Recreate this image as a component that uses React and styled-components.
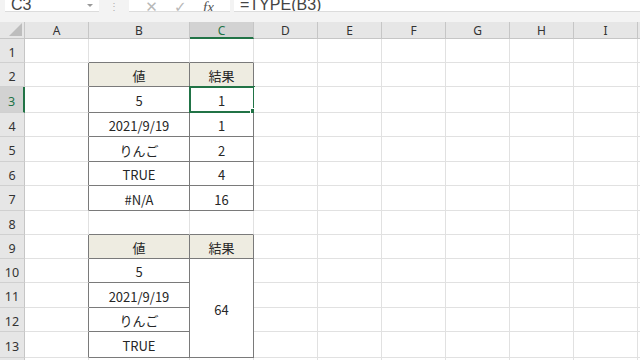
import React from 'react';
import styled, { createGlobalStyle } from 'styled-components';

const GREEN = '#217346';
const GRID = '#e1e1e1';
const DARK = '#7a7a7a';

const GlobalStyle = createGlobalStyle`
  html, body {
    margin: 0;
    padding: 0;
    background: #ffffff;
    overflow: hidden;
  }
  body {
    font-family: "Noto Sans CJK JP", "Noto Sans", sans-serif;
    color: #262626;
  }
`

const Page = styled.div`
  width: 640px;
  height: 360px;
  overflow: hidden;
  background: #ffffff;
`

const FormulaBar = styled.div`
  display: flex;
  align-items: flex-start;
  height: 22px;
  background: #f3f3f3;
  box-sizing: border-box;
`

const BarBox = styled.div`
  position: relative;
  height: 12px;
  width: ${props => props.$width};
  flex: ${props => props.$grow ? '1' : 'none'};
  margin-left: ${props => props.$gap || '0'};
  background: #ffffff;
  border-bottom: 1px solid #dcdcdc;
  box-sizing: border-box;
  overflow: hidden;
  display: flex;
  align-items: flex-end;
  justify-content: ${props => props.$spread ? 'space-around' : 'flex-start'};
  padding: 0 ${props => props.$pad || '6px'};
`

const BarText = styled.span`
  display: block;
  font-family: "Liberation Sans", sans-serif;
  font-size: 16px;
  line-height: 16px;
  margin-bottom: -2px;
  color: #444;
  white-space: nowrap;
`

const Caret = styled.span`
  margin-left: auto;
  margin-bottom: 4px;
  width: 0;
  height: 0;
  border-left: 3px solid transparent;
  border-right: 3px solid transparent;
  border-top: 3px solid #999;
`

const Dots = styled.div`
  width: 30px;
  height: 12px;
  display: flex;
  align-items: flex-end;
  justify-content: center;
  padding-bottom: 1px;
  box-sizing: border-box;
  color: #b0b0b0;
  font-size: 10px;
  line-height: 10px;
`

const Icon = styled.span`
  font-family: ${props => props.$serif ? '"Liberation Serif", serif' : '"DejaVu Sans", sans-serif'};
  font-style: ${props => props.$serif ? 'italic' : 'normal'};
  font-size: 15px;
  line-height: 15px;
  margin-bottom: -4px;
  color: ${props => props.$serif ? '#555' : '#b8b8b8'};
`

const Sheet = styled.div`
  display: grid;
  grid-template-columns: 25px 64px 101px 64px 64px 64px 64px 64px 64px 64px 64px;
  grid-template-rows: 17px ${props => props.$rows};
  width: 700px;
`

const Corner = styled.div`
  background: #e6e6e6;
  border-right: 1px solid #c6c6c6;
  border-bottom: 1px solid #c6c6c6;
  box-sizing: border-box;
  display: flex;
  align-items: flex-end;
  justify-content: flex-end;
  padding: 0 2px 2px 0;
`

const ColHead = styled.div`
  background: ${props => props.$active ? '#d2d2d2' : '#e6e6e6'};
  color: ${props => props.$active ? GREEN : '#333'};
  border-right: 1px solid #c6c6c6;
  border-bottom: ${props => props.$active ? `2px solid ${GREEN}` : '1px solid #c6c6c6'};
  box-sizing: border-box;
  display: flex;
  align-items: center;
  justify-content: center;
  font-family: "Noto Sans", sans-serif;
  font-size: 12px;
  padding-top: ${props => props.$active ? '1px' : '0'};
`

const RowHead = styled.div`
  background: ${props => props.$active ? '#d2d2d2' : '#e6e6e6'};
  color: ${props => props.$active ? GREEN : '#333'};
  border-right: ${props => props.$active ? `2px solid ${GREEN}` : '1px solid #c6c6c6'};
  border-bottom: 1px solid #d0d0d0;
  box-sizing: border-box;
  display: flex;
  align-items: center;
  justify-content: center;
  padding-top: 3px;
  font-family: "Noto Sans", sans-serif;
  font-size: 12.5px;
`

const Cell = styled.div`
  position: relative;
  grid-row: ${props => props.$span ? `span ${props.$span}` : 'auto'};
  background: ${props => props.$head ? '#eeece1' : '#ffffff'};
  border-right: 1px solid ${props => props.$darkRight ? DARK : GRID};
  border-bottom: 1px solid ${props => props.$darkBottom ? DARK : GRID};
  box-sizing: border-box;
  display: flex;
  align-items: center;
  justify-content: center;
  padding-top: 2px;
  font-size: 13px;
  color: #262626;
  white-space: nowrap;
`

const Selection = styled.div`
  position: absolute;
  left: -1px;
  top: -1px;
  right: -2px;
  bottom: -1px;
  border: 2px solid ${GREEN};
  pointer-events: none;
`

const Handle = styled.div`
  position: absolute;
  right: -4px;
  bottom: -4px;
  width: 5px;
  height: 5px;
  background: ${GREEN};
  border: 1px solid #ffffff;
`

const COLS = ['A', 'B', 'C', 'D', 'E', 'F', 'G', 'H', 'I', 'J'];
const ROW_HEIGHTS = [24, 24, 26, 24, 25, 24, 25, 24, 24, 24, 25, 24, 26, 24];

const VALUES = {
  'B2': { text: '値', head: true }, 'C2': { text: '結果', head: true },
  'B3': { text: '5' }, 'C3': { text: '1', selected: true },
  'B4': { text: '2021/9/19' }, 'C4': { text: '1' },
  'B5': { text: 'りんご' }, 'C5': { text: '2' },
  'B6': { text: 'TRUE' }, 'C6': { text: '4' },
  'B7': { text: '#N/A' }, 'C7': { text: '16' },
  'B9': { text: '値', head: true }, 'C9': { text: '結果', head: true },
  'B10': { text: '5' }, 'C10': { text: '64', span: 4 },
  'B11': { text: '2021/9/19' },
  'B12': { text: 'りんご' },
  'B13': { text: 'TRUE' },
};
const HIDDEN = ['C11', 'C12', 'C13'];

function inTable(r, c){
  const col = COLS[c];
  if(col !== 'B' && col !== 'C') return false;
  return (r >= 2 && r <= 7) || (r >= 9 && r <= 13);
}

const App = () => {
  let cells = new Array();
  cells.push(
    <Corner key="corner">
      <svg width="13" height="13" viewBox="0 0 13 13">
        <polygon points="13,0 13,13 0,13" fill="#bdbdbd" />
      </svg>
    </Corner>
  );
  COLS.forEach((col, c) => {
    cells.push(<ColHead key={'h' + col} $active={col === 'C'}>{col}</ColHead>);
  });
  for(let r = 1; r <= ROW_HEIGHTS.length; r++){
    cells.push(<RowHead key={'r' + r} $active={r === 3}>{r}</RowHead>);
    COLS.forEach((col, c) => {
      const id = col + r;
      if(HIDDEN.includes(id)) return;
      const v = VALUES[id] || {};
      const bottomRow = v.span ? r + v.span - 1 : r;
      cells.push(
        <Cell
          key={id}
          $span={v.span}
          $head={v.head}
          $darkRight={inTable(r, c) || inTable(r, c + 1)}
          $darkBottom={inTable(bottomRow, c) || inTable(bottomRow + 1, c)}
        >
          {v.text}
          {v.selected && <Selection><Handle /></Selection>}
        </Cell>
      );
    });
  }

  return (
    <Page>
      <GlobalStyle />
      <FormulaBar>
        <BarBox $width="94px" $gap="5px">
          <BarText>C3</BarText>
          <Caret />
        </BarBox>
        <Dots>⋮</Dots>
        <BarBox $width="101px" $spread $pad="8px">
          <Icon>✕</Icon>
          <Icon>✓</Icon>
          <Icon $serif>fx</Icon>
        </BarBox>
        <BarBox $grow $gap="4px">
          <BarText>=TYPE(B3)</BarText>
        </BarBox>
      </FormulaBar>
      <Sheet $rows={ROW_HEIGHTS.map(h => h + 'px').join(' ')}>
        {cells}
      </Sheet>
    </Page>
  );
}

export default App;
